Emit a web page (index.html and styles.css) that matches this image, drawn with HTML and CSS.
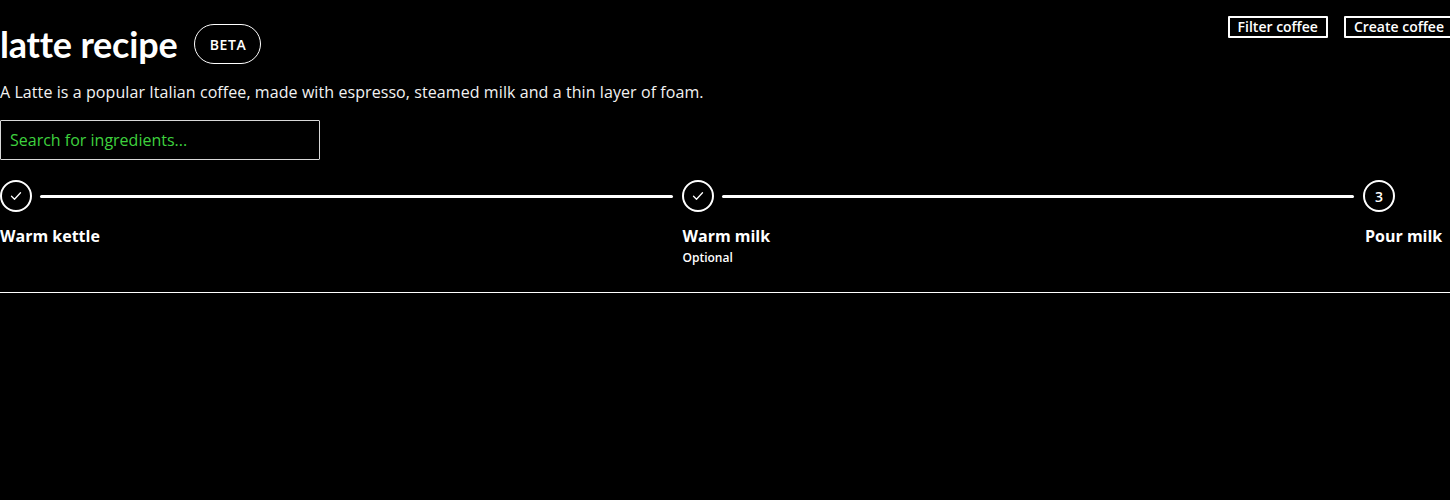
FILE: index.html
```html
<!DOCTYPE html>
<html lang="en">
<head>
<meta charset="utf-8">
<title>latte recipe</title>
<link rel="stylesheet" href="styles.css">
</head>
<body>
<header class="top">
  <div class="intro">
    <div class="title-row">
      <h1 class="title">latte recipe</h1>
      <span class="badge">BETA</span>
    </div>
    <p class="desc">A Latte is a popular Italian coffee, made with espresso, steamed milk and a thin layer of foam.</p>
    <input class="search" type="text" placeholder="Search for ingredients...">
  </div>
  <div class="actions">
    <button class="btn">Filter coffee</button>
    <button class="btn">Create coffee</button>
  </div>
</header>
<ol class="stepper">
  <li class="step grow">
    <div class="step-head">
      <span class="dot"><svg viewBox="0 0 16 16" width="16" height="16"><path d="M3.5 8.3l3 3 6-6.5" fill="none" stroke="#fff" stroke-width="1.3" stroke-linecap="round" stroke-linejoin="round"/></svg></span>
      <span class="line"></span>
    </div>
    <div class="label">Warm kettle</div>
  </li>
  <li class="step grow">
    <div class="step-head">
      <span class="dot"><svg viewBox="0 0 16 16" width="16" height="16"><path d="M3.5 8.3l3 3 6-6.5" fill="none" stroke="#fff" stroke-width="1.3" stroke-linecap="round" stroke-linejoin="round"/></svg></span>
      <span class="line"></span>
    </div>
    <div class="label">Warm milk</div>
    <div class="sub">Optional</div>
  </li>
  <li class="step last">
    <div class="step-head">
      <span class="dot num">3</span>
    </div>
    <div class="label">Pour milk</div>
  </li>
</ol>
<hr class="rule">
</body>
</html>
```
FILE: styles.css
```css
html, body {
  margin: 0;
  padding: 0;
  background: #000;
  color: #fff;
  font-family: "Open Sans", "Noto Sans", sans-serif;
}
.top {
  display: flex;
  justify-content: space-between;
  align-items: flex-start;
}
.title-row {
  display: flex;
  align-items: center;
  gap: 17px;
  padding-top: 24px;
}
.title {
  margin: 0;
  font-family: "Lato", "Open Sans", sans-serif;
  font-weight: 700;
  font-size: 36px;
  line-height: 40px;
  letter-spacing: -0.2px;
}
.badge {
  display: inline-flex;
  align-items: center;
  justify-content: center;
  box-sizing: border-box;
  width: 67px;
  height: 40px;
  border: 1px solid #fff;
  border-radius: 20px;
  font-size: 14px;
  font-weight: 600;
  letter-spacing: 0.6px;
}
.desc {
  margin: 16px 0 0;
  font-size: 16px;
  line-height: 24px;
  letter-spacing: 0.08px;
  color: #f2f2f2;
}
.search {
  display: block;
  box-sizing: border-box;
  width: 320px;
  height: 40px;
  margin-top: 16px;
  padding: 0 9px;
  background: #000;
  border: 1px solid #d8d8d8;
  border-radius: 1px;
  color: #fff;
  font-family: "Open Sans", "Noto Sans", sans-serif;
  font-size: 16px;
  outline: none;
}
.search::placeholder {
  color: #3ed13e;
  opacity: 1;
}
.actions {
  display: flex;
  gap: 16px;
  padding-top: 16px;
  margin-right: -4px;
}
.btn {
  box-sizing: border-box;
  height: 22px;
  padding: 0 8px;
  background: #000;
  color: #fff;
  border: 2px solid #fff;
  border-radius: 1px;
  font-family: "Open Sans", "Noto Sans", sans-serif;
  font-size: 14px;
  font-weight: 600;
  line-height: 18px;
  white-space: nowrap;
}
.stepper {
  display: flex;
  list-style: none;
  margin: 20px 0 0;
  padding: 0;
}
.step {
  display: flex;
  flex-direction: column;
  flex: 0 0 auto;
  width: 87px;
}
.step.grow {
  flex: 1 1 0;
  width: auto;
}
.step-head {
  display: flex;
  align-items: center;
  height: 32px;
}
.dot {
  box-sizing: border-box;
  width: 32px;
  height: 32px;
  flex: none;
  border: 2px solid #fff;
  border-radius: 50%;
  display: flex;
  align-items: center;
  justify-content: center;
}
.dot.num {
  font-size: 14px;
  font-weight: 600;
}
.line {
  flex: 1;
  height: 3px;
  margin: 0 9px 0 8px;
  background: #fff;
  border-radius: 2px;
}
.label {
  margin-top: 13px;
  font-size: 16px;
  font-weight: 700;
  line-height: 22px;
  white-space: nowrap;
}
.step.grow + .step.grow .label,
.step.grow + .step.grow .sub {
  padding-left: 1px;
}
.last .label {
  padding-left: 2px;
}
.sub {
  margin-top: 3px;
  font-size: 12px;
  font-weight: 600;
  line-height: 16px;
}
.rule {
  margin: 26px 0 0;
  border: 0;
  border-top: 1px solid #fff;
}
```
